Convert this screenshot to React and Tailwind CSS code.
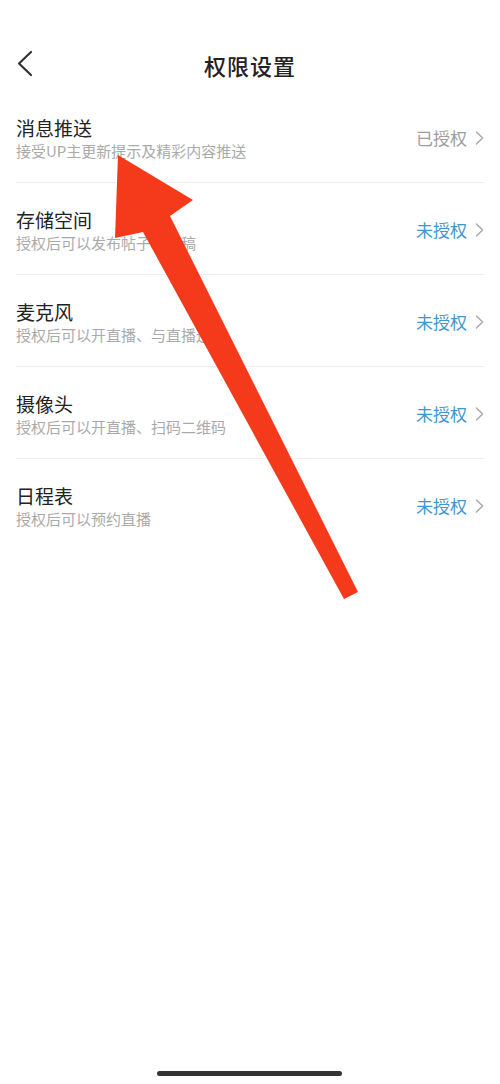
import React from "react";

const rows = [
  { title: "消息推送", sub: "接受UP主更新提示及精彩内容推送", status: "已授权", granted: true },
  { title: "存储空间", sub: "授权后可以发布帖子和投稿", status: "未授权", granted: false },
  { title: "麦克风", sub: "授权后可以开直播、与直播连麦", status: "未授权", granted: false },
  { title: "摄像头", sub: "授权后可以开直播、扫码二维码", status: "未授权", granted: false },
  { title: "日程表", sub: "授权后可以预约直播", status: "未授权", granted: false },
];

function Chevron() {
  return (
    <svg width="9" height="14" viewBox="0 0 9 14" className="ml-[8px]">
      <path d="M1.5 1 L7.5 7 L1.5 13" fill="none" stroke="#a6a6a6" strokeWidth="1.4" strokeLinecap="round" strokeLinejoin="round" />
    </svg>
  );
}

export default function App() {
  return (
    <div
      className="relative w-[500px] h-[1084px] bg-white overflow-hidden"
      style={{ fontFamily: '"Noto Sans CJK SC", "Noto Sans", sans-serif' }}
    >
      <div className="h-[91px] pt-[40px]">
        <div className="relative h-[51px] flex items-center justify-center">
          <svg width="20" height="28" viewBox="0 0 20 28" className="absolute left-[15px] top-[10px]">
            <path d="M16 2 L4 13.5 L16 25" fill="none" stroke="#333" strokeWidth="2.2" strokeLinecap="round" strokeLinejoin="round" />
          </svg>
          <span className="text-[22px] font-medium text-[#222] tracking-[1px]">权限设置</span>
        </div>
      </div>

      <div>
        {rows.map((r, i) => (
          <div
            key={r.title}
            className={`mx-4 h-[92px] flex items-center justify-between ${i < rows.length - 1 ? "border-b border-[#eeeeee]" : ""}`}
          >
            <div className="flex flex-col pt-[4px]">
              <span className="text-[19px] leading-[24px] text-[#222]">{r.title}</span>
              <span className="text-[15px] leading-[22px] text-[#aaaaaa]">{r.sub}</span>
            </div>
            <div className="flex items-center mt-[2px]">
              <span className={`text-[17px] ${r.granted ? "text-[#9e9e9e]" : "text-[#3f97d0]"}`}>{r.status}</span>
              <Chevron />
            </div>
          </div>
        ))}
      </div>

      <svg className="absolute left-0 top-0 pointer-events-none" width="500" height="1084" viewBox="0 0 500 1084">
        <polygon
          points="118,155 193,200 170,216 358,592 344,599 143,232 115,238"
          fill="#f43a1b"
        />
      </svg>

      <div className="absolute left-[157px] top-[1071px] w-[185px] h-[5px] rounded-full bg-[#333]" />
    </div>
  );
}
